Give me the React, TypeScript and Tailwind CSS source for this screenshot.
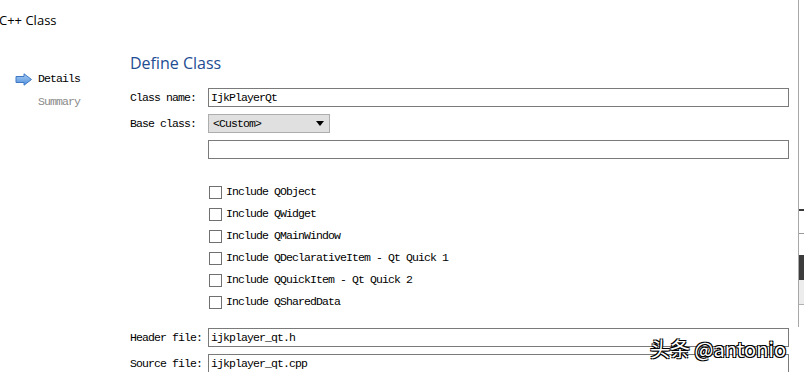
import React from "react";

const monoBase = "font-['Liberation_Mono',monospace] text-[11.5px] tracking-[-0.9px]";
const mono = `${monoBase} text-black`;

const includes = [
  "Include QObject",
  "Include QWidget",
  "Include QMainWindow",
  "Include QDeclarativeItem - Qt Quick 1",
  "Include QQuickItem - Qt Quick 2",
  "Include QSharedData",
];

function Arrow() {
  return (
    <svg width="18" height="13" viewBox="0 0 18 13">
      <defs>
        <linearGradient id="ag" x1="0" y1="0" x2="0" y2="1">
          <stop offset="0" stopColor="#a9cdf3" />
          <stop offset="1" stopColor="#4f8fdc" />
        </linearGradient>
      </defs>
      <path d="M1 3.5 H9 V0.8 L16.5 6.5 L9 12.2 V9.5 H1 Z" fill="url(#ag)" stroke="#3f78c4" strokeWidth="1" />
    </svg>
  );
}

function TextBox({ value }: { value?: string }) {
  return (
    <div className={`h-[19px] w-[581px] shrink-0 border border-[#7a7a7a] bg-white flex items-center pl-[2px] ${mono}`}>
      {value}
    </div>
  );
}

function Row({ label, children }: { label: string; children: React.ReactNode }) {
  return (
    <div className="flex items-center">
      <div className={`w-[78px] shrink-0 ${mono}`}>{label}</div>
      {children}
    </div>
  );
}

export default function App() {
  return (
    <div className="relative w-[804px] h-[372px] overflow-hidden bg-white flex items-start font-['Open_Sans',sans-serif]">
      <div className="w-[798px] shrink-0 flex flex-col">
        <div className="h-[41px] pt-[11px] text-[13px] leading-[18px] text-black -ml-[1px]">C++ Class</div>
        <div className="flex">
          <div className="w-[130px] shrink-0 pl-[15px] pt-[30px] flex flex-col gap-[7px]">
            <div className="flex items-center h-[16px] gap-[5px]">
              <Arrow />
              <span className={mono}>Details</span>
            </div>
            <div className={`pl-[23px] h-[16px] flex items-center ${monoBase} text-[#8a8a8a]`}>Summary</div>
          </div>
          <div className="flex flex-col">
            <div className="mt-[11px] h-[22px] leading-[22px] text-[16px] text-[#234d93]">Define Class</div>
            <div className="mt-[14px] flex flex-col gap-[7px]">
              <Row label="Class name:">
                <TextBox value="IjkPlayerQt" />
              </Row>
              <Row label="Base class:">
                <div className={`h-[19px] w-[122px] border border-[#adadad] bg-[#e0e0e0] flex items-center justify-between pl-[4px] pr-[5px] ${mono}`}>
                  <span>&lt;Custom&gt;</span>
                  <svg width="8" height="5" viewBox="0 0 8 5">
                    <path d="M0 0 H8 L4 5 Z" fill="#000" />
                  </svg>
                </div>
              </Row>
              <Row label="">
                <TextBox />
              </Row>
            </div>
            <div className="mt-[22px] pl-[79px] flex flex-col">
              {includes.map((t) => (
                <div key={t} className="h-[22px] flex items-center gap-[4px]">
                  <div className="w-[13px] h-[13px] border border-[#707070] bg-white" />
                  <span className={mono}>{t}</span>
                </div>
              ))}
            </div>
            <div className="mt-[15px] flex flex-col gap-[7px]">
              <Row label="Header file:">
                <TextBox value="ijkplayer_qt.h" />
              </Row>
              <Row label="Source file:">
                <TextBox value="ijkplayer_qt.cpp" />
              </Row>
            </div>
          </div>
        </div>
      </div>
      <div className="flex-1 h-[327px] border-l border-[#a8a8a8] bg-white flex flex-col">
        <div className="h-[209px]" />
        <div className="h-[2px] bg-[#3a3a3a]" />
        <div className="h-[22px]" />
        <div className="h-[1px] bg-[#9a9a9a]" />
        <div className="h-[21px]" />
        <div className="h-[25px] bg-[#3c3c3c]" />
        <div className="h-[24px] bg-[#ececec]" />
        <div className="h-[1px] bg-[#b0b0b0]" />
      </div>
      <div
        className="absolute left-[650px] top-[336px] text-[20px] leading-[26px] text-white font-['Noto_Sans_CJK_SC',sans-serif]"
        style={{ textShadow: "1px 1px 0 #000, -1px -1px 0 #000, 1px -1px 0 #000, -1px 1px 0 #000" }}
      >
        头条 @antonio
      </div>
    </div>
  );
}
